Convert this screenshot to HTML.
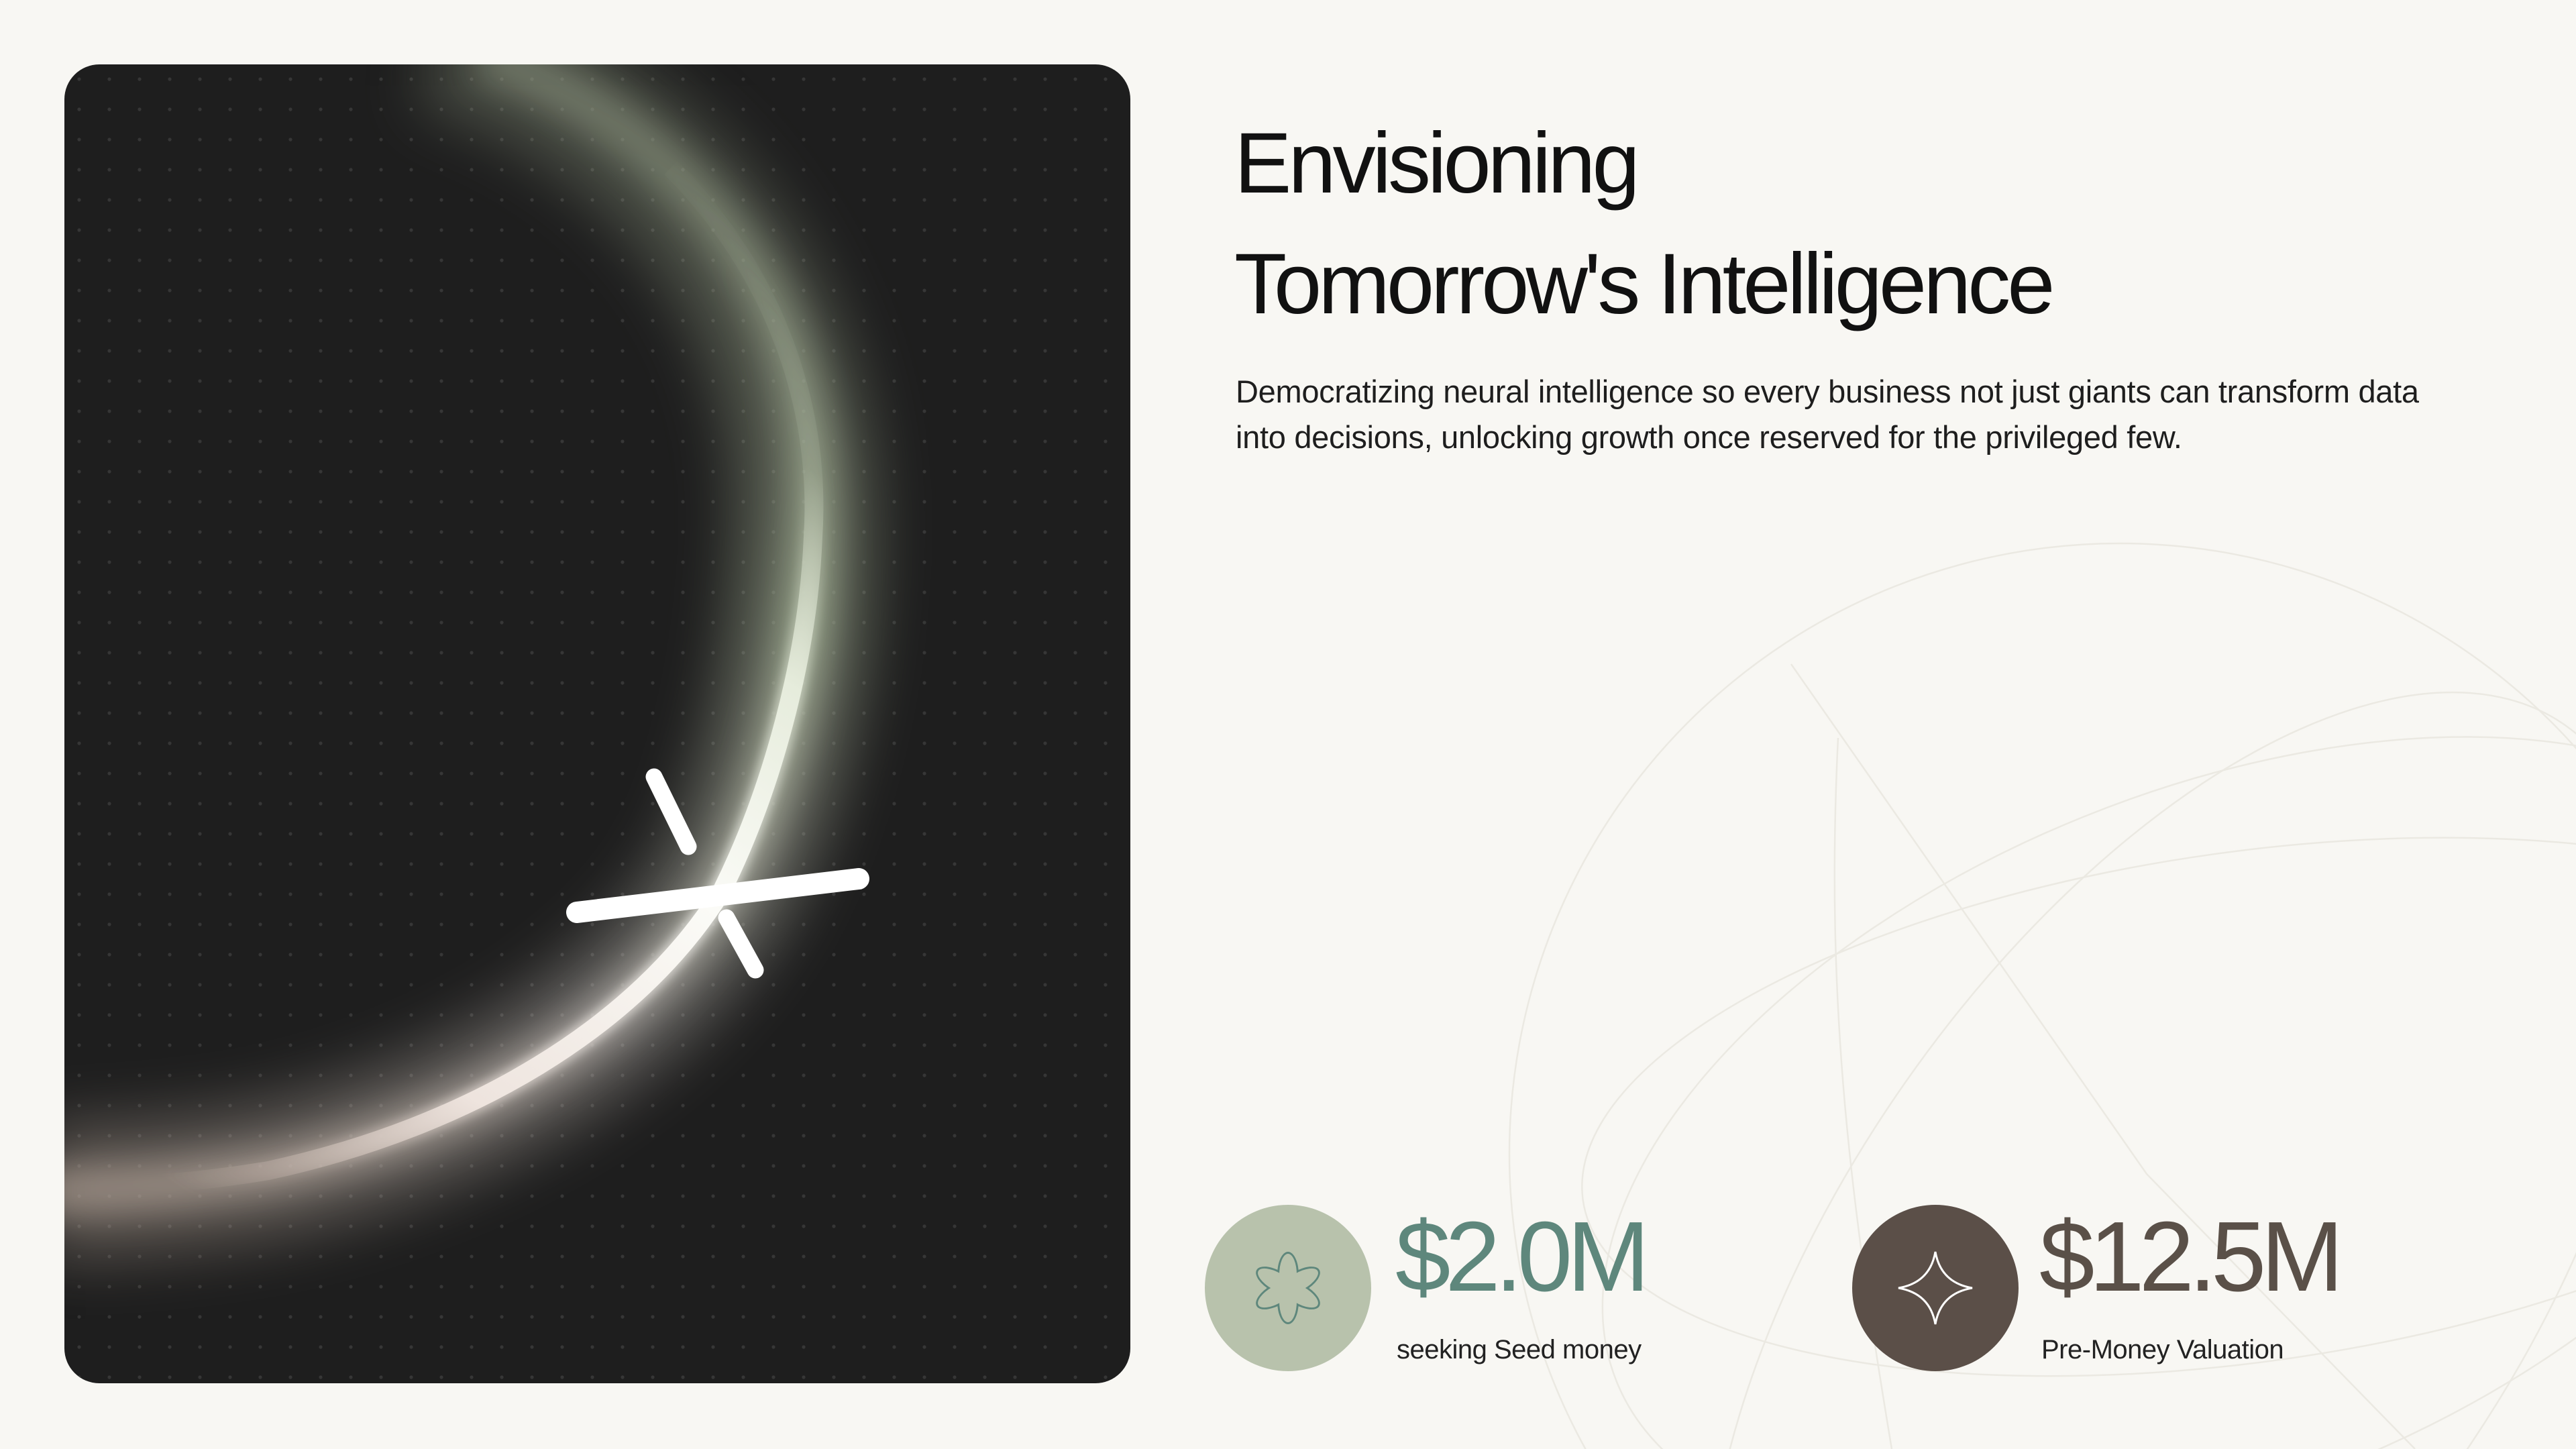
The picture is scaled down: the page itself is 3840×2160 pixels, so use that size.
<!DOCTYPE html>
<html><head><meta charset="utf-8"><style>
html,body{margin:0;padding:0;width:3840px;height:2160px;background:#f8f7f3;overflow:hidden;font-family:"Liberation Sans",sans-serif;position:relative;}
.abs{position:absolute;}
.t{color:#111;font-size:128px;letter-spacing:-5px;white-space:nowrap;line-height:1;}
.p{color:#1e1e1e;font-size:47px;line-height:68px;letter-spacing:-0.3px;width:1800px;}
.num{font-size:148px;letter-spacing:-8px;line-height:1;white-space:nowrap;}
.lab{font-size:40px;color:#222;letter-spacing:-0.5px;white-space:nowrap;}
</style></head><body>
<svg class="abs" style="left:0;top:0;display:block" width="3840" height="2160" viewBox="0 0 3840 2160">
<defs>
<pattern id="dots" x="96" y="96" width="45" height="45" patternUnits="userSpaceOnUse"><circle cx="22" cy="22" r="2.6" fill="#363636"/></pattern>
<clipPath id="cc"><rect x="96" y="96" width="1589" height="1966" rx="52"/></clipPath>
<clipPath id="pg"><rect x="0" y="0" width="3840" height="2160"/></clipPath>
<linearGradient id="glow" gradientUnits="userSpaceOnUse" x1="900" y1="100" x2="150" y2="1760">
<stop offset="0" stop-color="#9aa58c" stop-opacity="0.45"/>
<stop offset="0.35" stop-color="#a9b69a" stop-opacity="0.75"/>
<stop offset="0.7" stop-color="#d8d2cc" stop-opacity="0.55"/>
<stop offset="1" stop-color="#b8a89c" stop-opacity="0.6"/>
</linearGradient>
<linearGradient id="core" gradientUnits="userSpaceOnUse" x1="1150" y1="300" x2="250" y2="1760">
<stop offset="0" stop-color="#c8d2bc" stop-opacity="0"/>
<stop offset="0.18" stop-color="#c8d2bc" stop-opacity="0.15"/>
<stop offset="0.35" stop-color="#e6ecdc" stop-opacity="1"/>
<stop offset="0.55" stop-color="#fbfbf7"/>
<stop offset="0.8" stop-color="#eee4de"/>
<stop offset="1" stop-color="#c8b5aa" stop-opacity="0"/>
</linearGradient>
<filter id="b0" x="-50%" y="-50%" width="200%" height="200%"><feGaussianBlur stdDeviation="45"/></filter>
<filter id="b1" x="-50%" y="-50%" width="200%" height="200%"><feGaussianBlur stdDeviation="25"/></filter>
<filter id="b2" x="-50%" y="-50%" width="200%" height="200%"><feGaussianBlur stdDeviation="8"/></filter>
</defs>
<g clip-path="url(#cc)">
<rect x="96" y="96" width="1589" height="1966" fill="#1e1e1e"/>
<rect x="96" y="96" width="1589" height="1966" fill="url(#dots)"/>
<path d="M 650 60 C 950 150 1180 400 1200 720 C 1210 960 1150 1200 1075 1330 C 950 1530 700 1680 400 1745 C 250 1770 150 1775 60 1775" fill="none" stroke="url(#glow)" stroke-width="200" filter="url(#b0)" opacity="0.65"/>
<path d="M 720 80 C 1000 180 1200 420 1212 720 C 1220 960 1150 1200 1075 1330 C 950 1530 700 1680 400 1745 C 250 1770 150 1775 60 1775" fill="none" stroke="url(#glow)" stroke-width="70" filter="url(#b1)"/>
<path d="M 1000 250 C 1150 400 1225 600 1212 800 C 1205 980 1150 1180 1075 1330 C 950 1530 700 1680 400 1745 C 280 1765 180 1770 100 1770" fill="none" stroke="url(#core)" stroke-width="36" filter="url(#b2)" opacity="0.7"/>
<path d="M 1000 250 C 1150 400 1225 600 1212 800 C 1205 980 1150 1180 1075 1330 C 950 1530 700 1680 400 1745 C 280 1765 180 1770 100 1770" fill="none" stroke="url(#core)" stroke-width="28"/>
</g>
<g stroke="#fff" stroke-linecap="round" fill="none">
<line x1="860" y1="1360" x2="1280" y2="1310" stroke-width="32"/>
<line x1="975" y1="1158" x2="1026" y2="1262" stroke-width="25"/>
<line x1="1083" y1="1368" x2="1126" y2="1446" stroke-width="25"/>
</g>
<g fill="none" stroke="#ebe9e2" stroke-width="2.5" clip-path="url(#pg)">
<circle cx="3160" cy="1720" r="910"/>
<ellipse cx="3300" cy="1700" rx="960" ry="520" transform="rotate(-22 3300 1700)"/>
<ellipse cx="3350" cy="1650" rx="1000" ry="380" transform="rotate(-8 3350 1650)"/>
<ellipse cx="3250" cy="1900" rx="500" ry="1000" transform="rotate(35 3250 1900)"/>
<path d="M2670 990 L3200 1750 L3600 2160"/>
<path d="M2740 1100 C2720 1500 2760 1800 2820 2160"/>
</g>
<circle cx="1920" cy="1920" r="124" fill="#b8c2ac"/>
<g>
<g fill="#5e877c">
<ellipse cx="1920" cy="1900" rx="16" ry="34"/>
<ellipse cx="1920" cy="1900" rx="16" ry="34" transform="rotate(60 1920 1920)"/>
<ellipse cx="1920" cy="1900" rx="16" ry="34" transform="rotate(120 1920 1920)"/>
<ellipse cx="1920" cy="1900" rx="16" ry="34" transform="rotate(180 1920 1920)"/>
<ellipse cx="1920" cy="1900" rx="16" ry="34" transform="rotate(240 1920 1920)"/>
<ellipse cx="1920" cy="1900" rx="16" ry="34" transform="rotate(300 1920 1920)"/>
</g>
<g fill="#b8c2ac">
<ellipse cx="1920" cy="1900" rx="13" ry="31"/>
<ellipse cx="1920" cy="1900" rx="13" ry="31" transform="rotate(60 1920 1920)"/>
<ellipse cx="1920" cy="1900" rx="13" ry="31" transform="rotate(120 1920 1920)"/>
<ellipse cx="1920" cy="1900" rx="13" ry="31" transform="rotate(180 1920 1920)"/>
<ellipse cx="1920" cy="1900" rx="13" ry="31" transform="rotate(240 1920 1920)"/>
<ellipse cx="1920" cy="1900" rx="13" ry="31" transform="rotate(300 1920 1920)"/>
</g>
</g>
<circle cx="2885" cy="1920" r="124" fill="#5b4f48"/>
<path d="M2885 1866 Q2893 1912 2940 1920 Q2893 1928 2885 1974 Q2877 1928 2830 1920 Q2877 1912 2885 1866 Z" fill="none" stroke="#fff" stroke-width="3"/>
</svg>
<div class="abs t" style="left:1840px;top:180px;">Envisioning</div>
<div class="abs t" style="left:1840px;top:360px;">Tomorrow's Intelligence</div>
<div class="abs p" style="left:1842px;top:550px;">Democratizing neural intelligence so every business not just giants can transform data into decisions, unlocking growth once reserved for the privileged few.</div>
<div class="abs num" style="left:2080px;top:1800px;color:#5e877c;">$2.0M</div>
<div class="abs lab" style="left:2082px;top:1990px;">seeking Seed money</div>
<div class="abs num" style="left:3040px;top:1800px;color:#5a5048;">$12.5M</div>
<div class="abs lab" style="left:3043px;top:1990px;">Pre-Money Valuation</div>
</body></html>
